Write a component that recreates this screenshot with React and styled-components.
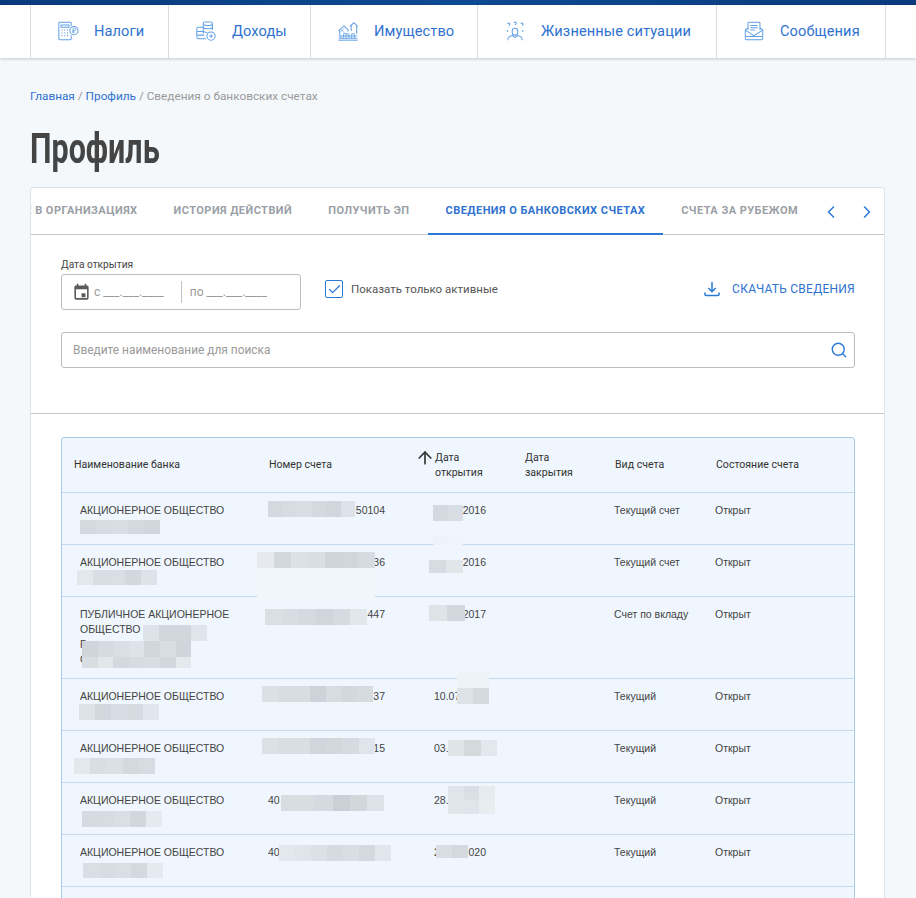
import React from 'react';
import styled, { createGlobalStyle } from 'styled-components';
import { ChevronLeft, ChevronRight, Search, ArrowUp, Check } from 'lucide-react';

const navStroke = '#62a0e6';

const TaxIcon = () => (
  <svg width="22" height="22" viewBox="0 0 24 24" fill="none" stroke={navStroke} strokeWidth="1.1">
    <path d="M15.5 6.5V3.5a1 1 0 0 0-1-1H3a1 1 0 0 0-1 1v17a1 1 0 0 0 1 1h11.5a1 1 0 0 0 1-1v-4" />
    <path d="M4.5 5.5h8.5v2.5H4.5z" />
    <path d="M5 11h1M8 11h1M11 11h1M5 14h1M8 14h1M11 14h1M5 17h1M8 17h1M11 17h1" strokeWidth="1.4" />
    <circle cx="18.5" cy="11.5" r="4.5" />
    <path d="M17.5 14.5v-5.5h1.6a1.4 1.4 0 0 1 0 2.8h-2.4M16.7 13.2h2.4" strokeWidth=".9" />
  </svg>
);

const IncomeIcon = () => (
  <svg width="22" height="22" viewBox="0 0 24 24" fill="none" stroke={navStroke} strokeWidth="1.1">
    <ellipse cx="14" cy="4" rx="5" ry="2" />
    <path d="M9 4v11M19 4v7M9 8c1.500 2 8.500 2 10 0M9 12c1 1.300 3 1.700 4.500 1.800" />
    <path d="M9 8H3.500C2 8 2 9 2 9.500v9C2 20 3 20.500 4 20.500h8" />
    <path d="M2 12.500h7M2 16.500h8" />
    <circle cx="17.500" cy="17.500" r="4.500" />
    <path d="M15.500 17.500h4M17.500 15.500v4" />
  </svg>
);

const PropertyIcon = () => (
  <svg width="22" height="22" viewBox="0 0 24 24" fill="none" stroke={navStroke} strokeWidth="1.1">
    <path d="M1.500 12l6-5.500 5 4.500M3 11v6M12 10.500v2" />
    <path d="M14 7l4.500-4 4 4M15.500 5.800V12M21.500 6v9" />
    <path d="M3.500 9.500l5 5M8 9l-4 4" strokeWidth=".7" />
    <path d="M2 17.500h20M2 20h20" />
    <path d="M4 17.500v2.500M7 15v5M10 15v5M13 15v5M16 15v5M19 15v5M7 15h6M16 15h3" strokeWidth=".9" />
    <path d="M1.500 22h21" />
  </svg>
);

const SituationIcon = () => (
  <svg width="22" height="22" viewBox="0 0 24 24" fill="none" stroke={navStroke} strokeWidth="1.1">
    <path d="M4 4.200a1.200 1.200 0 1 1 1.500 1.400v.8M11 3.200a1.200 1.200 0 1 1 1.500 1.400v.8M18.500 4.200a1.200 1.200 0 1 1 1.500 1.400v.8" />
    <path d="M12 9a3 3 0 0 1 3 3v1.500a3 3 0 0 1-6 0V12a3 3 0 0 1 3-3z" />
    <path d="M4 22c0-3 2.500-4.500 5.500-5l2.500 2 2.500-2c3 .5 5.500 2 5.500 5" />
    <path d="M3 12h1.500M19.500 12H21M5 8.500v.1M19 8.500v.1" strokeWidth="1.400" />
  </svg>
);

const MessageIcon = () => (
  <svg width="22" height="22" viewBox="0 0 24 24" fill="none" stroke={navStroke} strokeWidth="1.1">
    <path d="M5.500 11V3.500a1 1 0 0 1 1-1h11a1 1 0 0 1 1 1V11" />
    <path d="M8 6h8M8 8.500h8M8 11h5" />
    <path d="M5.500 8.500l-3 2.500v9a1.500 1.500 0 0 0 1.500 1.500h16a1.500 1.500 0 0 0 1.500-1.500v-9l-3-2.500" />
    <path d="M2.500 11l9.500 6 9.500-6" />
    <path d="M3 18h18" />
  </svg>
);

const CalendarIcon = () => (
  <svg width="19" height="19" viewBox="0 0 24 24" fill="#5a5a5a">
    <path d="M19 3h-1V1h-2v2H8V1H6v2H5c-1.100 0-2 .9-2 2v14c0 1.100.9 2 2 2h14c1.100 0 2-.9 2-2V5c0-1.100-.9-2-2-2zm0 16H5V8h14v11z" />
    <path d="M12 13h5v5h-5z" />
  </svg>
);

const DownloadIcon = () => (
  <svg width="16" height="16" viewBox="0 0 16 16" fill="none" stroke="#2a78d8" strokeWidth="1.500">
    <path d="M8 1v9.500M4.300 7l3.700 3.700L11.700 7" />
    <path d="M1 11.500v2a1 1 0 0 0 1 1h12a1 1 0 0 0 1-1v-2" />
  </svg>
);

const navItems = [
  { label: 'Налоги', width: 138, icon: <TaxIcon /> },
  { label: 'Доходы', width: 142, icon: <IncomeIcon /> },
  { label: 'Имущество', width: 167, icon: <PropertyIcon /> },
  { label: 'Жизненные ситуации', width: 239, icon: <SituationIcon /> },
  { label: 'Сообщения', width: 170, icon: <MessageIcon /> },
];

const tabs = ['Участие в организациях', 'История действий', 'Получить ЭП', 'Сведения о банковских счетах', 'Счета за рубежом'];

const g1 = ['#d3d9de', '#d6dce2', '#d8dee4', '#d3d9df', '#d0d6dc', '#dce2e9'];

// мозаика поверх скрытых данных: x, y считаются от верхнего левого угла строки
const rows = [
  {
    name: ['АКЦИОНЕРНОЕ ОБЩЕСТВО', '\u00a0'], numL: '', numR: '50104', dateL: '', dateR: '2016', type: 'Текущий счет',
    patches: [
      { x: 206, y: 8, n: 6, h: 16, w: 14.5, colors: g1 },
      { x: 18, y: 27, n: 5, h: 14, w: 16, colors: g1 },
      { x: 371, y: 12, n: 2, h: 16, w: 15, colors: ['#d4d9df', '#d9dee4'] },
      { x: 371, y: 44, n: 2, h: 8, w: 15, colors: ['#edf3f9', '#eef4fa'] },
    ],
  },
  {
    name: ['АКЦИОНЕРНОЕ ОБЩЕСТВО', '\u00a0'], numL: '', numR: '36', dateL: '', dateR: '2016', type: 'Текущий счет',
    patches: [
      { x: 195, y: 7, n: 7, h: 16, w: 16.900, colors: ['#e6eaee', '#d3d8dd', '#dbe1e7', '#d8dee4', '#d0d5da', '#d1d6db', '#d6dbe1'] },
      { x: 195, y: 23, n: 1, h: 30, w: 118, colors: ['#f1f6fb'] },
      { x: 15, y: 25, n: 5, h: 15, w: 16, colors: ['#e3e8ec', '#d8dee3', '#d9dfe5', '#d2d8de', '#dde3e8'] },
      { x: 367, y: 15, n: 2, h: 13, w: 17, colors: ['#d7dce2', '#e1e6ea'] },
    ],
  },
  {
    name: ['ПУБЛИЧНОЕ АКЦИОНЕРНОЕ', 'ОБЩЕСТВО', 'Р', 'С'], numL: '', numR: '447', dateL: '', dateR: '2017', type: 'Счет по вкладу',
    patches: [
      { x: 203, y: 12, n: 6, h: 16, w: 17, colors: ['#dadfe4', '#d8dde3', '#d5dae0', '#d1d6dc', '#d6dbe1', '#e2e7eb'] },
      { x: 367, y: 8, n: 2, h: 16, w: 18, colors: ['#dfe4e9', '#d3d8df'] },
      { x: 81, y: 28, n: 4, h: 16, w: 16, colors: ['#dde3e8', '#d1d7dc', '#d1d7dc', '#dfe5eb'] },
      { x: 20, y: 44, n: 7, h: 16, w: 15.600, colors: ['#cfd5db', '#d5dbe1', '#d9dfe5', '#dde3e8', '#d0d6dc', '#d8dee3', '#cfd5db'] },
      { x: 20, y: 60, n: 7, h: 11, w: 15.600, colors: ['#d8dde2', '#e2e7ec', '#d3d9df', '#d6dce2', '#d8dee4', '#d2d8de', '#e4e9ee'] },
    ],
  },
  {
    name: ['АКЦИОНЕРНОЕ ОБЩЕСТВО', '\u00a0'], numL: '', numR: '37', dateL: '10.07', dateR: '', type: 'Текущий',
    patches: [
      { x: 200, y: 7, n: 7, h: 16, w: 15.900, colors: ['#dbe0e5', '#d8dde2', '#d8dde2', '#cdd3d9', '#d7dce1', '#d3d8dd', '#d6dbe0'] },
      { x: 17, y: 25, n: 5, h: 16, w: 16, colors: ['#dce2e7', '#d2d8dd', '#d7dde4', '#d5dbe1', '#dfe6ed'] },
      { x: 395, y: 9, n: 2, h: 16, w: 16, colors: ['#dce2e8', '#d5dae0'] },
      { x: 395, y: -8, n: 2, h: 17, w: 16, colors: ['#eef3f8', '#eef3f8'] },
    ],
  },
  {
    name: ['АКЦИОНЕРНОЕ ОБЩЕСТВО', '\u00a0'], numL: '', numR: '15', dateL: '03.', dateR: '', type: 'Текущий',
    patches: [
      { x: 200, y: 7, n: 7, h: 16, w: 16.100, colors: ['#dce1e5', '#d9dee3', '#d9dee3', '#d0d6dc', '#d3d8dd', '#d6dbe1', '#dfe5ea'] },
      { x: 12, y: 27, n: 5, h: 16, w: 16.200, colors: ['#e3e8ec', '#d8dee2', '#dae0e4', '#d3d9dd', '#d6dce2'] },
      { x: 386, y: 9, n: 3, h: 16, w: 16.300, colors: ['#dfe4e9', '#d3d9dd', '#e3e8ee'] },
    ],
  },
  {
    name: ['АКЦИОНЕРНОЕ ОБЩЕСТВО', '\u00a0'], numL: '40', numR: '', dateL: '28.', dateR: '', type: 'Текущий',
    patches: [
      { x: 219, y: 12, n: 6, h: 16, w: 17.200, colors: ['#d8dde2', '#d8dde2', '#d4dae0', '#cbd0d6', '#d2d7dc', '#dce2e8'] },
      { x: 20, y: 28, n: 5, h: 16, w: 16, colors: ['#d5dbe0', '#d6dce1', '#d9dfe4', '#d1d7dc', '#e4eaf0'] },
      { x: 386, y: 3, n: 3, h: 14, w: 15.500, colors: ['#dfe5ea', '#d9dfe4', '#e6ebef'] },
      { x: 386, y: 17, n: 3, h: 14, w: 15.500, colors: ['#e0e6ea', '#dfe5ea', '#e8edf0'] },
    ],
  },
  {
    name: ['АКЦИОНЕРНОЕ ОБЩЕСТВО', '\u00a0'], numL: '40', numR: '', dateL: '2', dateR: '020', type: 'Текущий',
    patches: [
      { x: 217, y: 10, n: 7, h: 16, w: 16, colors: ['#e2e8ee', '#dfe5ea', '#dbe1e7', '#d5dbe1', '#d8dee4', '#d3d9df', '#e1e7ed'] },
      { x: 21, y: 28, n: 5, h: 15, w: 16, colors: ['#d9dfe4', '#d7dde2', '#d9dfe4', '#d3d9df', '#e4eaf0'] },
      { x: 374, y: 10, n: 2, h: 13, w: 16, colors: ['#d9dee4', '#d4d9df'] },
    ],
  },
];

const Patch = ({ x, y, n, h, w, colors }) => (
  <PatchStrip $x={x} $y={y} $h={h}>
    {Array.from({ length: n }).map((_, i) => (
      <PatchTile key={i} $w={w} $c={colors[i % colors.length]} />
    ))}
  </PatchStrip>
);

const App = () => {
  return (
    <Page>
      <GlobalStyle />
      <TopBar />
      <Nav>
        {navItems.map((item) => (
          <NavItem key={item.label} $width={item.width}>
            <NavIcon>{item.icon}</NavIcon>
            {item.label}
          </NavItem>
        ))}
      </Nav>
      <Main>
        <Breadcrumbs>
          <a>Главная</a> / <a>Профиль</a> / Сведения о банковских счетах
        </Breadcrumbs>
        <Title>Профиль</Title>
        <Card>
          <TabBar>
            <TabScroller>
              {tabs.map((tab) => (
                <Tab key={tab} $active={tab.startsWith('Сведения')}>{tab}</Tab>
              ))}
            </TabScroller>
            <TabArrows>
              <ChevronLeft size={20} strokeWidth={1.8} />
              <ChevronRight size={20} strokeWidth={1.8} />
            </TabArrows>
          </TabBar>
          <Filters>
            <FilterRow>
              <DateField>
                <FieldLabel>Дата открытия</FieldLabel>
                <DateBox>
                  <CalendarIcon />
                  <DatePart>с ___.___.____</DatePart>
                  <DateDivider />
                  <DatePart>по ___.___.____</DatePart>
                </DateBox>
              </DateField>
              <CheckLabel>
                <CheckBox><Check size={15} strokeWidth={2} /></CheckBox>
                Показать только активные
              </CheckLabel>
              <DownloadLink>
                <DownloadIcon />
                Скачать сведения
              </DownloadLink>
            </FilterRow>
            <SearchBox>
              Введите наименование для поиска
              <Search size={18} strokeWidth={1.8} color="#2a78d8" />
            </SearchBox>
          </Filters>
          <TableArea>
            <Table>
              <HeadRow>
                <HeadCell>Наименование банка</HeadCell>
                <HeadCell>Номер счета</HeadCell>
                <SortHeadCell>
                  <ArrowUp size={20} strokeWidth={2} color="#333" />
                  <span>Дата<br />открытия</span>
                </SortHeadCell>
                <HeadCell>Дата<br />закрытия</HeadCell>
                <HeadCell>Вид счета</HeadCell>
                <HeadCell>Состояние счета</HeadCell>
              </HeadRow>
              {rows.map((row, i) => (
                <Row key={i}>
                  <NameCell>
                    {row.name.map((line, j) => <div key={j}>{line}</div>)}
                  </NameCell>
                  <NumberCell><span>{row.numL}</span><span>{row.numR}</span></NumberCell>
                  <DateCell><span>{row.dateL}</span><span>{row.dateR}</span></DateCell>
                  <Cell />
                  <TextCell>{row.type}</TextCell>
                  <TextCell>Открыт</TextCell>
                  {row.patches.map((p, j) => <Patch key={j} {...p} />)}
                </Row>
              ))}
              <EmptyRow />
            </Table>
          </TableArea>
        </Card>
      </Main>
    </Page>
  );
};

export default App;

const GlobalStyle = createGlobalStyle`
  html, body {
    margin: 0;
    height: 100%;
    overflow: hidden;
    background: #f4f8fb;
  }
`;

const Page = styled.div`
  height: 898px;
  overflow: hidden;
  font-family: Roboto, "Liberation Sans", sans-serif;
  color: #333;
`;

const TopBar = styled.div`
  height: 5px;
  background: linear-gradient(90deg, #0a3a7c 0%, #0e4a92 50%, #0a3a7c 100%);
`;

const Nav = styled.nav`
  height: 53px;
  padding-left: 30px;
  display: flex;
  background: #fff;
  box-shadow: 0 1px 3px rgba(0, 0, 0, 0.2);
`;

const NavItem = styled.div`
  width: ${({ $width }) => $width}px;
  box-sizing: border-box;
  display: flex;
  align-items: center;
  padding: 0 0 2px 26px;
  border-left: 1px solid #dcdcdc;
  font-size: 14.600px;
  letter-spacing: 0.1px;
  color: #2f72d0;
  white-space: nowrap;

  &:last-child {
    border-right: 1px solid #dcdcdc;
  }
`;

const NavIcon = styled.span`
  width: 37px;
  flex: none;
  display: flex;
`;

const Main = styled.main`
  padding: 30px 31px 0 30px;
`;

const Breadcrumbs = styled.div`
  font-size: 11.800px;
  line-height: 16px;
  color: #9a9a9a;

  & a {
    color: #2f72d0;
  }
`;

// сжатое начертание получаем через scaleX: узкого шрифта в наборе нет
const Title = styled.h1`
  margin: 22px 0 15px;
  font-family: Roboto, sans-serif;
  font-size: 42px;
  line-height: 46px;
  font-weight: 700;
  color: #444;
  transform: scaleX(0.725);
  transform-origin: left center;
`;

const Card = styled.section`
  background: #fff;
  border: 1px solid #e0e4e8;
  border-bottom: 0;
  border-radius: 3px 3px 0 0;
`;

const TabBar = styled.div`
  height: 46px;
  display: flex;
  border-bottom: 1px solid #c8c8c8;
`;

const TabScroller = styled.div`
  width: 785px;
  height: 47px;
  display: flex;
  justify-content: flex-end;
  overflow: hidden;
`;

const Tab = styled.div`
  flex: none;
  padding: 0 18px;
  line-height: 46px;
  height: 47px;
  box-sizing: border-box;
  font-size: 11px;
  font-weight: 700;
  letter-spacing: 0.45px;
  text-transform: uppercase;
  white-space: nowrap;
  color: ${({ $active }) => ($active ? '#2f72d0' : '#9aa0a6')};
  border-bottom: 2px solid ${({ $active }) => ($active ? '#2a78d8' : 'transparent')};
`;

const TabArrows = styled.div`
  flex: 1;
  display: flex;
  align-items: center;
  gap: 16px;
  padding: 2px 0 0 5px;
  color: #2a78d8;
`;

const Filters = styled.div`
  padding: 23px 29px 45px 30px;
  border-bottom: 1px solid #c8c8c8;
  display: flex;
  flex-direction: column;
  gap: 22px;
`;

const FilterRow = styled.div`
  display: flex;
  align-items: flex-end;
`;

const DateField = styled.div`
  display: flex;
  flex-direction: column;
  gap: 2px;
`;

const FieldLabel = styled.label`
  font-size: 10.200px;
  line-height: 14px;
  color: #444;
`;

const DateBox = styled.div`
  width: 240px;
  height: 36px;
  box-sizing: border-box;
  display: flex;
  align-items: center;
  padding-left: 10px;
  border: 1px solid #bdbdbd;
  border-radius: 3px;
  background: #fff;
`;

const DatePart = styled.span`
  margin-left: 3px;
  font-size: 12px;
  color: #9a9a9a;
  white-space: nowrap;
`;

const DateDivider = styled.i`
  width: 1px;
  height: 22px;
  flex: none;
  margin: 0 5px 0 17px;
  background: #c4c4c4;
`;

const CheckLabel = styled.div`
  display: flex;
  align-items: center;
  gap: 8px;
  margin: 0 0 12px 24px;
  font-size: 11.500px;
  color: #555;
`;

const CheckBox = styled.span`
  width: 18px;
  height: 18px;
  box-sizing: border-box;
  display: flex;
  align-items: center;
  justify-content: center;
  border: 1.500px solid #2a78d8;
  border-radius: 2px;
  color: #2a78d8;
`;

const DownloadLink = styled.div`
  margin: 0 0 13px auto;
  display: flex;
  align-items: center;
  gap: 12px;
  font-size: 12px;
  text-transform: uppercase;
  letter-spacing: 0.25px;
  color: #2f72d0;
`;

const SearchBox = styled.div`
  height: 36px;
  box-sizing: border-box;
  display: flex;
  align-items: center;
  justify-content: space-between;
  padding: 0 6px 0 11px;
  border: 1px solid #bdbdbd;
  border-radius: 3px;
  font-size: 11.900px;
  color: #9a9a9a;
`;

const TableArea = styled.div`
  padding: 23px 29px 0 30px;
`;

const Table = styled.div`
  background: #eff6fd;
  border: 1px solid #a6c9ea;
  border-radius: 3px 3px 0 0;
`;

const columns = '195px 156px 100px 90px 101px 1fr';

const HeadRow = styled.div`
  height: 55px;
  box-sizing: border-box;
  padding-bottom: 1px;
  display: grid;
  grid-template-columns: ${columns};
  align-items: center;
  border-bottom: 1px solid #c5d9ec;
`;

const HeadCell = styled.div`
  padding-left: 12px;
  font-size: 10.550px;
  line-height: 15px;
  color: #333;
`;

const SortHeadCell = styled(HeadCell)`
  padding-left: 0;
  margin-left: 2px;
  display: flex;
  align-items: flex-start;

  & svg {
    margin-top: -2px;
  }
`;

const Row = styled.div`
  position: relative;
  display: grid;
  grid-template-columns: ${columns};
  min-height: 52px;
  box-sizing: border-box;
  border-bottom: 1px solid #c5d9ec;
  font-family: "Liberation Sans", Arial, sans-serif;
  font-size: 10.500px;
  line-height: 15px;
  color: #444;
`;

const EmptyRow = styled.div`
  height: 52px;
`;

const Cell = styled.div`
  padding: 10px 0 11px;
`;

const NameCell = styled(Cell)`
  padding-left: 18px;
  padding-right: 16px;
`;

const NumberCell = styled(Cell)`
  display: flex;
  justify-content: space-between;
  padding-left: 11px;
  padding-right: 28px;
`;

const DateCell = styled(Cell)`
  display: flex;
  justify-content: space-between;
  padding-left: 21px;
  padding-right: 27px;
`;

const TextCell = styled(Cell)`
  padding-left: 11px;
`;

const PatchStrip = styled.div`
  position: absolute;
  left: ${({ $x }) => $x}px;
  top: ${({ $y }) => $y}px;
  height: ${({ $h }) => $h}px;
  display: flex;
  filter: blur(0.4px);
`;

const PatchTile = styled.i`
  width: ${({ $w }) => $w}px;
  background: ${({ $c }) => $c};
`;
